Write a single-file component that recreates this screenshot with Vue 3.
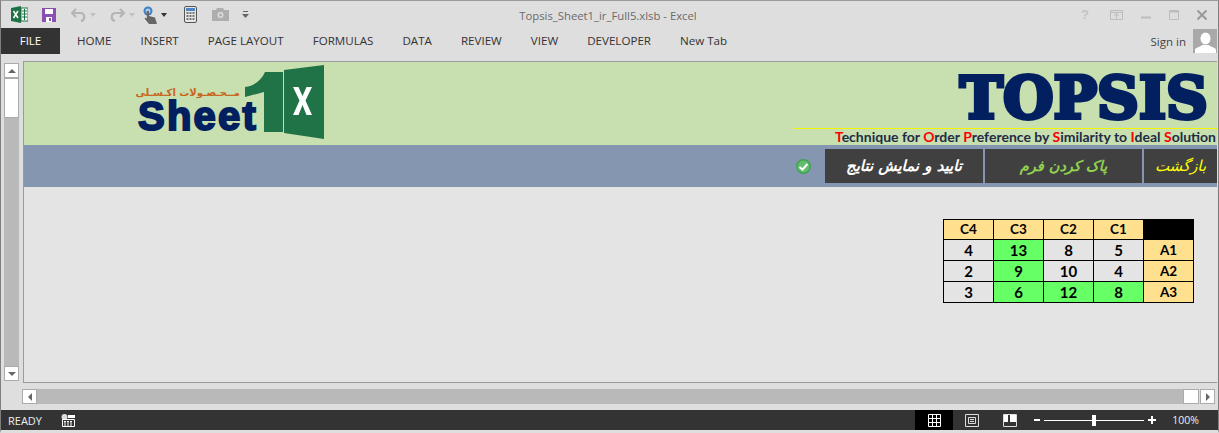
<script setup>
const tabs = ['HOME', 'INSERT', 'PAGE LAYOUT', 'FORMULAS', 'DATA', 'REVIEW', 'VIEW', 'DEVELOPER', 'New Tab']
const headers = ['C4', 'C3', 'C2', 'C1']
const rows = [
  { label: 'A1', cells: [{ v: 4 }, { v: 13, hit: true }, { v: 8 }, { v: 5 }] },
  { label: 'A2', cells: [{ v: 2 }, { v: 9, hit: true }, { v: 10 }, { v: 4 }] },
  { label: 'A3', cells: [{ v: 3 }, { v: 6, hit: true }, { v: 12, hit: true }, { v: 8, hit: true }] }
]
const subtitle = [
  ['T', 'echnique for '], ['O', 'rder '], ['P', 'reference by '],
  ['S', 'imilarity to '], ['I', 'deal '], ['S', 'olution']
]
</script>

<template>
  <div class="window">
    <header class="titlebar">
      <div class="qat">
        <svg class="ic" style="margin-left:10px" width="17" height="17" viewBox="0 0 17 17"><path d="M0 2l10-2v17L0 15z" fill="#1e7145"/><path d="M10 2h7v13h-7z" fill="#fff" stroke="#1e7145"/><path d="M11 5h5M11 8h5M11 11h5M13.5 3v11" stroke="#1e7145"/><path d="M2.5 5l4.500 7M7 5l-4.500 7" stroke="#fff" stroke-width="1.500"/></svg>
        <svg class="ic" style="margin-left:14px" width="14" height="14" viewBox="0 0 14 14"><path d="M0 0h14v14H0z" fill="#8a4fb0"/><path d="M3 1h8v5H3z" fill="#fff"/><path d="M4 9h6v5H4z" fill="#fff"/><path d="M7 10h2v3H7z" fill="#8a4fb0"/></svg>
        <svg class="ic" style="margin-left:15px" width="15" height="14" viewBox="0 0 15 14"><path d="M5 1L1 5l4 4M1 5h8c6 0 5 7 1 8" fill="none" stroke="#b4b4b4" stroke-width="2.200"/></svg>
        <span class="caret pale" style="margin-left:4px"></span>
        <svg class="ic" style="margin-left:14px" width="15" height="14" viewBox="0 0 15 14"><path d="M10 1l4 4-4 4M14 5H6c-6 0-5 7-1 8" fill="none" stroke="#b4b4b4" stroke-width="2.200"/></svg>
        <span class="caret pale" style="margin-left:4px"></span>
        <svg class="ic" style="margin-left:8px" width="16" height="18" viewBox="0 0 16 18"><circle cx="5" cy="5" r="4.500" fill="#3f7fc4"/><circle cx="5" cy="5" r="2.500" fill="#a9cdf0"/><path d="M3.500 5h2.500v5l6 1.500 2 6.500H6L1.500 12.500l1.500-1 1 1z" fill="#666"/></svg>
        <span class="caret" style="margin-left:2px"></span>
        <svg class="ic" style="margin-left:17px" width="13" height="17" viewBox="0 0 13 17"><rect x=".5" y=".5" width="12" height="16" rx="1.500" fill="#e6e6e6" stroke="#555"/><path d="M2 2h9v3H2z" fill="#4a86c5"/><path d="M2.500 7h8M2.500 10h8M2.500 13h8" stroke="#777" stroke-width="2" stroke-dasharray="2 1"/></svg>
        <svg class="ic" style="margin-left:15px" width="17" height="13" viewBox="0 0 17 13"><path d="M0 2h4l1-2h6l1 2h5v11H0z" fill="#aeaeae"/><circle cx="8.500" cy="7" r="3" fill="#dedede"/><circle cx="8.500" cy="7" r="1.500" fill="#aeaeae"/></svg>
        <svg class="ic" style="margin-left:13px" width="7" height="7" viewBox="0 0 7 7"><path d="M1 .5h5" stroke="#666"/><path d="M0 3h7L3.500 7z" fill="#666"/></svg>
      </div>
      <div class="doc-title">Topsis_Sheet1_ir_Full5.xlsb - Excel</div>
      <div class="winctl">
        <span class="help">?</span>
        <svg width="13" height="10" viewBox="0 0 13 10"><path d="M.5.500h12v9H.5z" fill="none" stroke="#bdbdbd"/><path d="M.5 2.500h12" stroke="#bdbdbd"/><path d="M6.500 8.500V4M4 6l2.500-2.500L9 6" fill="none" stroke="#bdbdbd"/></svg>
        <svg width="10" height="10" viewBox="0 0 10 10"><path d="M0 7.500h10" stroke="#bdbdbd" stroke-width="2"/></svg>
        <svg width="10" height="10" viewBox="0 0 10 10"><path d="M.5.500h9v9h-9z" fill="none" stroke="#bdbdbd"/><path d="M0 1.500h10" stroke="#bdbdbd" stroke-width="2"/></svg>
        <svg width="10" height="10" viewBox="0 0 10 10"><path d="M.5.500l9 9M9.500.500l-9 9" stroke="#999" stroke-width="2"/></svg>
      </div>
    </header>

    <nav class="ribbon">
      <div class="file">FILE</div>
      <div class="tabs">
        <span v-for="t in tabs" :key="t" class="tab">{{ t }}</span>
      </div>
      <div class="signin">
        <span>Sign in</span>
        <svg width="24" height="24" viewBox="0 0 24 24"><path d="M0 0h24v24H0z" fill="#a9a9a9"/><ellipse cx="12.500" cy="9.500" rx="5" ry="6" fill="#fff"/><path d="M2 24v-3c0-3 6-3 7-5h7c1 2 7 2 7 5v3z" fill="#fff"/></svg>
      </div>
    </nav>

    <main class="workspace">
      <aside class="vscroll">
        <div class="sbtn"><span class="arrow up"></span></div>
        <div class="vthumb"></div>
        <div class="vtrack"></div>
        <div class="sbtn"><span class="arrow down"></span></div>
      </aside>

      <section class="sheet">
        <div class="banner">
          <div class="logo">
            <div class="logo-words">
              <span class="logo-fa" lang="fa">مــحـصـولات اکـسـلی</span>
              <span class="logo-en">Sheet</span>
            </div>
            <svg class="logo-mark" width="80" height="76" viewBox="0 0 80 76">
              <path d="M0 23C10 22 17 15 20 8H38V68H19V28L0 33z" fill="#1f7346"/>
              <path d="M39 6L79 1V75L39 69z" fill="#1f7346"/>
              <path d="M48 23h5.500l4 9 4-9H67l-6.500 13.500L67 51h-5.500l-4-10-4 10H48l6.500-14.500z" fill="#fff"/>
            </svg>
          </div>
          <div class="brand">
            <div class="brand-title">TOPSIS</div>
            <div class="brand-sub">
              <template v-for="(p, i) in subtitle" :key="i"><b class="red">{{ p[0] }}</b>{{ p[1] }}</template>
            </div>
          </div>
        </div>

        <div class="actions" dir="ltr">
          <svg class="check" width="15" height="15" viewBox="0 0 15 15"><circle cx="7.500" cy="7.500" r="7.500" fill="#3fa352"/><circle cx="7.500" cy="7.500" r="6" fill="#62bd6e"/><path d="M3.500 8l3 2.500 5-5.500" fill="none" stroke="#fff" stroke-width="2"/></svg>
          <div class="act w1 white" lang="fa">تایید و نمایش نتایج</div>
          <div class="act w2 green" lang="fa">پاک کردن فرم</div>
          <div class="act w3 yellow" lang="fa">بازگشت</div>
        </div>

        <div class="grid-area">
          <table class="matrix">
            <thead>
              <tr>
                <th v-for="h in headers" :key="h">{{ h }}</th>
                <th class="black"></th>
              </tr>
            </thead>
            <tbody>
              <tr v-for="r in rows" :key="r.label">
                <td v-for="(c, i) in r.cells" :key="i" :class="{ hit: c.hit }">{{ c.v }}</td>
                <th>{{ r.label }}</th>
              </tr>
            </tbody>
          </table>
        </div>
      </section>
    </main>

    <div class="hscroll">
      <div class="sbtn h"><span class="arrow left"></span></div>
      <div class="htrack"></div>
      <div class="hthumb"></div>
      <div class="sbtn h"><span class="arrow right"></span></div>
    </div>

    <footer class="status">
      <span class="ready">READY</span>
      <svg class="macro" width="14" height="13" viewBox="0 0 14 13"><circle cx="3.500" cy="3" r="3" fill="#ddd"/><path d="M1.500 5.500h12v7h-12z" fill="none" stroke="#fff"/><path d="M3 7.500h9M3 9h9M3 11h9" stroke="#fff" stroke-dasharray="2 1"/><path d="M7 1h7v3H7z" fill="#fff"/></svg>
      <div class="status-right">
        <div class="view active"><svg width="13" height="13" viewBox="0 0 13 13"><path d="M.5.500h12v12H.5zM4.500 0v13M8.500 0v13M0 4.500h13M0 8.500h13" fill="none" stroke="#fff"/></svg></div>
        <div class="view"><svg width="14" height="13" viewBox="0 0 14 13"><path d="M.5.500h13v12H.5z" fill="none" stroke="#ddd"/><path d="M3.500 3.500h7v6h-7zM5 5.500h4M5 7.500h4" fill="none" stroke="#ddd"/></svg></div>
        <div class="view"><svg width="14" height="13" viewBox="0 0 14 13"><path d="M.5.500h13v12H.5z" fill="none" stroke="#ddd"/><path d="M1 1h4v7H1zM7 1h6v7H7z" fill="#fff"/></svg></div>
        <div class="zoom">
          <span class="minus"></span>
          <div class="slider"><span class="knob"></span></div>
          <span class="plus"></span>
        </div>
        <span class="pct">100%</span>
      </div>
    </footer>
  </div>
</template>

<style>
html, body { margin: 0; padding: 0; background: #dedede; }
</style>

<style scoped>
.window {
  width: 1219px;
  height: 433px;
  box-sizing: border-box;
  background: #dedede;
  border-left: 1px solid #7f7f7f;
  border-right: 1px solid #7f7f7f;
  border-top: 1px solid #9a9a9a;
  border-bottom: 3px solid #dedede;
  display: flex;
  flex-direction: column;
  font-family: "Open Sans", "Noto Sans", sans-serif;
  overflow: hidden;
  color: #333;
}
.titlebar {
  height: 27px;
  flex: none;
  display: flex;
  align-items: center;
  position: relative;
}
.qat { display: flex; align-items: center; }
.ic { display: block; flex: none; }
.caret {
  width: 0; height: 0;
  border-left: 3.500px solid transparent;
  border-right: 3.500px solid transparent;
  border-top: 4px solid #333;
}
.caret.pale { border-top-color: #c2c2c2; }
.doc-title {
  position: absolute;
  left: 0; right: 0; top: 6px;
  text-align: center;
  font-size: 11.300px;
  color: #6a6a6a;
  line-height: 17px;
  padding-right: 3px;
}
.winctl {
  margin-left: auto;
  display: flex;
  align-items: center;
  gap: 18px;
  padding-right: 11px;
}
.help { font: bold 13px/14px "Liberation Sans", sans-serif; color: #c4c4c4; margin-right: 3px; }
.ribbon {
  height: 26px;
  flex: none;
  display: flex;
  align-items: center;
}
.file {
  width: 59px;
  height: 26px;
  background: #333;
  color: #fff;
  font-size: 11.500px;
  line-height: 26px;
  text-align: center;
}
.tabs {
  display: flex;
  margin-left: 17px;
  gap: 29px;
}
.tab { font-size: 11.600px; color: #333; line-height: 26px; white-space: nowrap; }
.signin {
  margin-left: auto;
  display: flex;
  align-items: center;
  gap: 7px;
  padding-right: 1px;
  font-size: 11.500px;
  color: #444;
}
.signin svg { display: block; }
.workspace {
  flex: none;
  height: 322px;
  margin-top: 7px;
  display: flex;
}
.vscroll {
  width: 15px;
  margin: 2px 4px 2px 3px;
  display: flex;
  flex-direction: column;
  background: #b9b9b9;
}
.sbtn {
  height: 15px;
  flex: none;
  background: #fff;
  box-sizing: border-box;
  border: 1px solid #ababab;
  display: flex;
  align-items: center;
  justify-content: center;
}
.sbtn.h { width: 15px; height: 15px; }
.vthumb {
  height: 40px;
  flex: none;
  background: #fff;
  box-sizing: border-box;
  border: 1px solid #ababab;
}
.vtrack { flex: 1; }
.arrow { width: 0; height: 0; display: block; }
.arrow.up { border-left: 4px solid transparent; border-right: 4px solid transparent; border-bottom: 4px solid #666; }
.arrow.down { border-left: 4px solid transparent; border-right: 4px solid transparent; border-top: 4px solid #666; }
.arrow.left { border-top: 4px solid transparent; border-bottom: 4px solid transparent; border-right: 4px solid #666; }
.arrow.right { border-top: 4px solid transparent; border-bottom: 4px solid transparent; border-left: 4px solid #666; }
.sheet {
  width: 1194px;
  box-sizing: border-box;
  border: 1px solid #9b9b9b;
  border-right: 0;
  background: #e4e4e4;
  display: flex;
  flex-direction: column;
}
.banner {
  height: 83px;
  flex: none;
  background: #c8dfb0;
  display: flex;
  justify-content: space-between;
}
.logo {
  display: flex;
  align-items: flex-start;
  margin-left: 113px;
  padding-top: 2px;
}
.logo-words {
  display: flex;
  flex-direction: column;
  align-items: flex-start;
  width: 108px;
  padding-top: 23px;
}
.logo-fa {
  font: bold 10px/12px "DejaVu Sans", sans-serif;
  color: #c8661e;
  white-space: nowrap;
  direction: rtl;
  width: 103px;
  text-align: center;
}
.logo-en {
  font: bold 40px/30px "Liberation Sans", sans-serif;
  color: #02205f;
  letter-spacing: 2.200px;
  -webkit-text-stroke: 2px #02205f;
  white-space: nowrap;
  margin-left: 1px;
  margin-top: 2px;
}
.logo-mark { display: block; flex: none; }
.brand {
  width: 424px;
  display: flex;
  flex-direction: column;
  align-items: flex-end;
}
.brand-title {
  font: bold 58px/60px "DejaVu Serif", serif;
  color: #02205f;
  -webkit-text-stroke: 4px #02205f;
  stroke-linejoin: round;
  height: 60px;
  margin-top: 6px;
  padding-right: 9px;
  white-space: nowrap;
}
.brand-sub {
  width: 424px;
  box-sizing: border-box;
  border-top: 1px solid #f5f500;
  text-align: right;
  font: bold 14px/16px "Lato", sans-serif;
  color: #222b44;
  white-space: pre;
  padding-right: 1px;
}
.red { color: #f00; font-weight: bold; }
.actions {
  height: 42px;
  flex: none;
  background: #8496b0;
  display: flex;
  align-items: center;
  justify-content: flex-end;
  gap: 2px;
}
.check { display: block; margin-right: 12px; }
.act {
  height: 34px;
  background: #404040;
  box-sizing: border-box;
  display: flex;
  align-items: center;
  justify-content: center;
  font: italic 15px/34px "DejaVu Sans", sans-serif;
  white-space: nowrap;
  direction: rtl;
}
.w1 { width: 158px; font-weight: bold; }
.w2 { width: 157px; font-weight: bold; font-size: 14.500px; }
.w3 { width: 73px; }
.white { color: #fff; }
.green { color: #92d050; }
.yellow { color: #ffff00; }
.grid-area {
  flex: 1;
  display: flex;
  justify-content: flex-end;
  align-items: flex-start;
  padding: 32px 23px 0 0;
}
.matrix {
  border-collapse: collapse;
  table-layout: fixed;
  width: 251px;
  font-family: "Lato", sans-serif;
  color: #000;
}
.matrix th, .matrix td {
  width: 50px;
  height: 21px;
  padding: 0;
  box-sizing: border-box;
  border: 1px solid #000;
  text-align: center;
  vertical-align: middle;
  line-height: 15px;
  font-weight: bold;
}
.matrix thead th { height: 20px; }
.matrix th { background: #ffe08f; font-size: 13.500px; }
.matrix td { background: #e4e4e4; font-size: 15px; }
.matrix th.black { background: #000; }
.matrix td.hit { background: #66ff66; }
.hscroll {
  flex: none;
  height: 15px;
  margin: 6px 3px 0 21px;
  display: flex;
  background: #dedede;
}
.htrack { flex: 1; background: #b9b9b9; }
.hthumb { width: 16px; background: #fff; border: 1px solid #ababab; box-sizing: border-box; margin-right: 1px; }
.status {
  flex: none;
  height: 20px;
  margin-top: 6px;
  background: #333;
  display: flex;
  align-items: center;
  color: #eee;
  font-size: 11px;
}
.ready { margin-left: 7px; }
.macro { display: block; margin-left: 19px; }
.status-right { margin-left: auto; display: flex; align-items: center; height: 100%; }
.view {
  width: 38px;
  height: 100%;
  display: flex;
  align-items: center;
  justify-content: center;
}
.view.active { background: #000; }
.zoom { display: flex; align-items: center; margin-left: 5px; gap: 4px; }
.minus { width: 6px; height: 2px; background: #fff; }
.plus { width: 8px; height: 2px; background: #fff; position: relative; }
.plus::after { content: ""; position: absolute; left: 3px; top: -3px; width: 2px; height: 8px; background: #fff; }
.slider { width: 100px; height: 1px; background: #fff; position: relative; }
.knob { position: absolute; left: 48px; top: -5px; width: 4px; height: 11px; background: #fff; }
.pct { margin-left: 16px; margin-right: 19px; font-size: 10.500px; }
</style>
